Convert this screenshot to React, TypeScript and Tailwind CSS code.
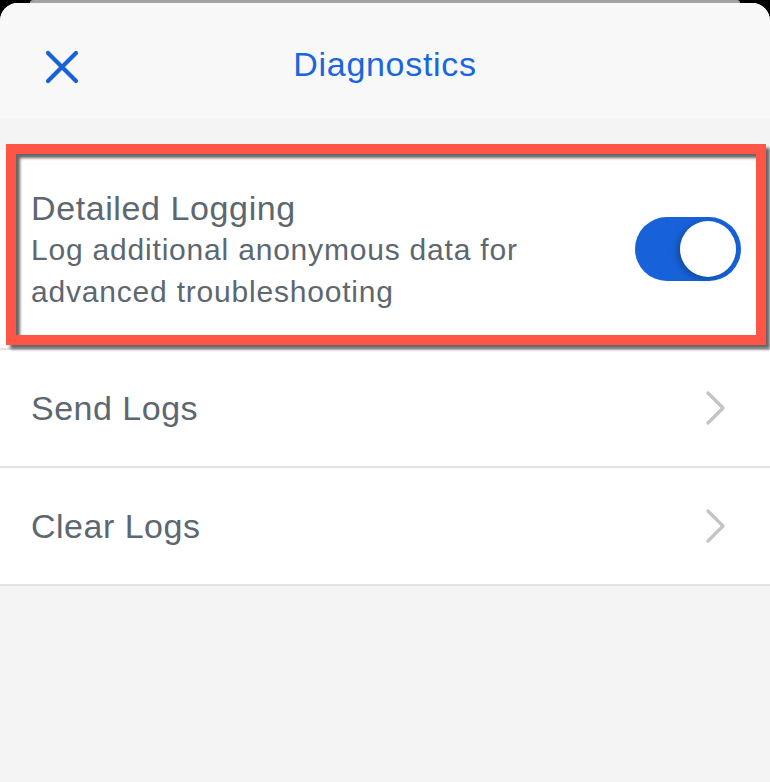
import { useState } from "react"

const font = { fontFamily: '"Liberation Sans", Arial, sans-serif' }

function Chevron() {
  return (
    <svg width="22" height="34" viewBox="0 0 22 34" className="shrink-0">
      <path d="M3 2 L18 17 L3 32" fill="none" stroke="#c4c4c6" strokeWidth="3.2" strokeLinecap="round" strokeLinejoin="round" />
    </svg>
  )
}

function Toggle({ on, onChange }: { on: boolean; onChange: () => void }) {
  return (
    <button
      onClick={onChange}
      className={`relative h-[64px] w-[106px] shrink-0 rounded-full ${on ? "bg-[#1762d8]" : "bg-[#e4e4e6]"}`}
    >
      <span
        className={`absolute top-[4px] h-[56px] w-[56px] rounded-full bg-white shadow-[-3px_2px_6px_rgba(0,0,0,0.25)] ${on ? "left-[45px]" : "left-[4px]"}`}
      />
    </button>
  )
}

function LinkRow({ label }: { label: string }) {
  return (
    <div className="flex h-[118px] items-center justify-between border-b-2 border-[#e3e3e5] bg-white pl-[31px] pr-[43px]">
      <span className="text-[34px] tracking-[0.5px] text-[#5c6770]">{label}</span>
      <Chevron />
    </div>
  )
}

export default function App() {
  const [detailed, setDetailed] = useState(true)

  return (
    <div className="h-[782px] w-[770px] overflow-hidden bg-black" style={font}>
      <div className="mx-[30px] h-[3px] rounded-t-lg bg-[#a3a3a3]" />
      <div className="flex h-[779px] flex-col overflow-hidden rounded-t-[18px] bg-[#f4f4f5]">
        <header className="relative flex h-[115px] items-center justify-center bg-[#f8f8f8] pt-[8px]">
          <button className="absolute left-[44px] top-[46px]">
            <svg width="36" height="36" viewBox="0 0 36 36">
              <path d="M4 4 L32 32 M32 4 L4 32" stroke="#1762d8" strokeWidth="4.2" strokeLinecap="round" />
            </svg>
          </button>
          <h1 className="text-[34px] tracking-[0.7px] text-[#1a66dc]">Diagnostics</h1>
        </header>

        <div className="mt-[32px]">
          <div className="relative flex h-[200px] items-center justify-between border-b-2 border-[#e3e3e5] bg-white pl-[31px] pr-[29px]">
            <div className="flex flex-col pt-[2px] text-[#5c6770]">
              <span className="text-[34px] leading-[42px] tracking-[0.6px]">Detailed Logging</span>
              <span className="w-[520px] text-[30px] leading-[42px] tracking-[0.8px]">
                Log additional anonymous data for advanced troubleshooting
              </span>
            </div>
            <Toggle on={detailed} onChange={() => setDetailed(!detailed)} />
            <div className="pointer-events-none absolute -top-[6px] left-[6px] right-[4px] bottom-[3px] border-[10px] border-[#fe5546] shadow-[4px_4px_3px_rgba(0,0,0,0.6),inset_4px_4px_3px_rgba(0,0,0,0.6)]" />
          </div>
          <LinkRow label="Send Logs" />
          <LinkRow label="Clear Logs" />
        </div>
      </div>
    </div>
  )
}
